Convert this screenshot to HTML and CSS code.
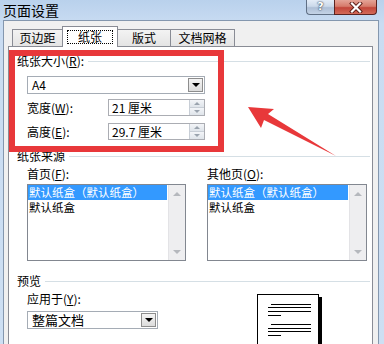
FILE: index.html
```html
<!DOCTYPE html>
<html lang="zh-CN">
<head>
    <meta charset="UTF-8">
    <meta name="viewport" content="width=device-width, initial-scale=1.0">
    <title>页面设置</title>
    <link rel="stylesheet" href="styles.css">
</head>
<body>
    <div class="dialog">
        <div class="title-bar">
            <span class="title">页面设置</span>
            <div class="title-buttons">
                <span class="btn-help">?</span>
                <span class="btn-close">
                    <svg width="14" height="11" viewBox="0 0 14 11">
                        <path d="M3 1.5 L11 9.5 M11 1.5 L3 9.5" stroke="#5a1c16" stroke-width="4" stroke-linecap="square"/>
                        <path d="M3 1.5 L11 9.5 M11 1.5 L3 9.5" stroke="#ffffff" stroke-width="2.2" stroke-linecap="square"/>
                    </svg>
                </span>
            </div>
        </div>

        <div class="client">
            <div class="tabs">
                <div class="tab tab-1">页边距</div>
                <div class="tab tab-2 active"><span class="focus">纸张</span></div>
                <div class="tab tab-3">版式</div>
                <div class="tab tab-4">文档网格</div>
            </div>

            <div class="panel">
                <!-- 纸张大小 -->
                <div class="group-title first"><span>纸张大小(<u>R</u>):</span></div>
                <div class="section">
                    <div class="combo size-combo">
                        <span class="combo-text">A4</span>
                        <span class="drop"></span>
                    </div>
                    <div class="field-row">
                        <span class="field-label">宽度(<u>W</u>):</span>
                        <div class="spin">
                            <span class="spin-text">21 厘米</span>
                            <span class="spin-btns"><i class="up"></i><i class="down"></i></span>
                        </div>
                    </div>
                    <div class="field-row second">
                        <span class="field-label">高度(<u>E</u>):</span>
                        <div class="spin">
                            <span class="spin-text">29.7 厘米</span>
                            <span class="spin-btns"><i class="up"></i><i class="down"></i></span>
                        </div>
                    </div>
                </div>

                <!-- 纸张来源 -->
                <div class="group-title source"><span>纸张来源</span></div>
                <div class="section source-cols">
                    <div class="col">
                        <div class="list-label">首页(<u>F</u>):</div>
                        <div class="listbox left-list">
                            <div class="items">
                                <div class="item selected">默认纸盒（默认纸盒）</div>
                                <div class="item">默认纸盒</div>
                            </div>
                            <div class="scrollbar"><i class="sc-up"></i><i class="sc-down"></i></div>
                        </div>
                    </div>
                    <div class="col">
                        <div class="list-label">其他页(<u>O</u>):</div>
                        <div class="listbox right-list">
                            <div class="items">
                                <div class="item selected">默认纸盒（默认纸盒）</div>
                                <div class="item">默认纸盒</div>
                            </div>
                            <div class="scrollbar"><i class="sc-up"></i><i class="sc-down"></i></div>
                        </div>
                    </div>
                </div>

                <!-- 预览 -->
                <div class="group-title preview"><span>预览</span></div>
                <div class="section preview-row">
                    <div class="apply-col">
                        <div class="list-label">应用于(<u>Y</u>):</div>
                        <div class="combo apply-combo">
                            <span class="combo-text">整篇文档</span>
                            <span class="drop"></span>
                        </div>
                    </div>
                    <div class="page">
                        <svg width="61" height="50" viewBox="0 0 61 50">
                            <g stroke="#000" stroke-width="1">
                                <line x1="13" y1="9.5" x2="53" y2="9.5"/>
                                <line x1="10" y1="12.5" x2="53" y2="12.5"/>
                                <line x1="10" y1="16.5" x2="53" y2="16.5"/>
                                <line x1="10" y1="20.5" x2="23" y2="20.5"/>
                                <line x1="13" y1="29.5" x2="53" y2="29.5"/>
                                <line x1="10" y1="33.5" x2="53" y2="33.5"/>
                                <line x1="10" y1="36.5" x2="53" y2="36.5"/>
                                <line x1="10" y1="40.5" x2="23" y2="40.5"/>
                            </g>
                        </svg>
                    </div>
                </div>
            </div>
        </div>

        <!-- annotation -->
        <div class="mark-box"></div>
        <svg class="mark-arrow" width="384" height="344" viewBox="0 0 384 344">
            <polygon points="248,107 274,109 268,114 336,156 264,120 261,128" fill="#e8383a"/>
        </svg>
    </div>
</body>
</html>
```

FILE: styles.css
```css
body {
    margin: 0;
    width: 384px;
    height: 344px;
    overflow: hidden;
    font-family: "Noto Sans CJK SC", sans-serif;
    font-size: 12px;
    color: #000;
    background: linear-gradient(180deg, #b9d1ec 0px, #c9dcf2 24px, #cddff3 100%);
}

u {
    text-decoration: underline;
}

.dialog {
    position: relative;
    height: 344px;
    display: flex;
    flex-direction: column;
}

.title-bar {
    height: 24px;
    display: flex;
    justify-content: space-between;
    align-items: flex-start;
}

.title {
    padding: 2px 0 0 3px;
    font-size: 14px;
    line-height: 16px;
}

.title-buttons {
    display: flex;
    margin-right: 7px;
}

.btn-help {
    width: 28px;
    height: 15px;
    box-sizing: border-box;
    border: 1px solid #5f6f84;
    border-top: none;
    border-right: none;
    border-radius: 0 0 0 4px;
    background: linear-gradient(180deg, #e3ecf7 0%, #cbd9ea 45%, #aebfd6 55%, #c4d3e6 100%);
    color: #fff;
    font-family: "DejaVu Sans", sans-serif;
    font-weight: bold;
    font-size: 11px;
    line-height: 14px;
    text-align: center;
    text-shadow: 0 0 2px #2c3a4d, 0 0 1px #2c3a4d;
}

.btn-close {
    width: 43px;
    height: 15px;
    box-sizing: border-box;
    border: 1px solid #5a2320;
    border-top: none;
    border-radius: 0 0 4px 0;
    background: linear-gradient(180deg, #e4a497 0%, #d67b6b 45%, #c2463a 55%, #d36a58 100%);
    display: flex;
    align-items: center;
    justify-content: center;
}

.client {
    flex: 1;
    margin: 0 5px 0 3px;
    border: 1px solid #8497ae;
    border-bottom: none;
    background: #f0f0f0;
    padding: 5px 5px 0 4px;
    display: flex;
    flex-direction: column;
}

.tabs {
    display: flex;
    align-items: flex-end;
    height: 21px;
    padding-left: 4px;
    margin-bottom: -1px;
    position: relative;
    z-index: 1;
}

.tab {
    box-sizing: border-box;
    height: 17px;
    margin-bottom: 1px;
    border: 1px solid #898c95;
    border-bottom: none;
    border-right: none;
    background: linear-gradient(180deg, #f3f3f3, #e4e4e4);
    line-height: 15px;
    text-align: center;
}

.tab-1 { width: 50px; }
.tab-2 { width: 56px; }
.tab-3 { width: 52px; }
.tab-4 { width: 65px; border-right: 1px solid #898c95; }

.tab.active {
    height: 21px;
    margin-bottom: 0;
    background: #fff;
    border-right: 1px solid #898c95;
    display: flex;
    align-items: center;
    justify-content: center;
}

.tab-2 + .tab {
    border-left: none;
}

.focus {
    display: block;
    width: 46px;
    height: 14px;
    box-sizing: border-box;
    border: 1px dotted #000;
    line-height: 12px;
}

.panel {
    flex: 1;
    background: #fff;
    border: 1px solid #898c95;
    border-bottom: none;
}

.group-title {
    display: flex;
    align-items: center;
    height: 14px;
    line-height: 14px;
    padding-left: 8px;
    margin-right: 2px;
}

.group-title::after {
    content: "";
    flex: 1;
    height: 0;
    border-top: 1px solid #d5dfe5;
    margin-left: 4px;
}

.group-title.first { margin-top: 7px; }
.group-title.source { margin-top: 9px; }
.group-title.preview { margin-top: 13px; }

.section {
    padding-left: 18px;
}

.combo {
    box-sizing: border-box;
    height: 18px;
    border: 1px solid #a5acb5;
    background: #fff;
    display: flex;
    align-items: center;
    justify-content: space-between;
    padding: 0 1px 0 4px;
}

.size-combo {
    width: 178px;
    margin-top: 8px;
}

.apply-combo {
    width: 131px;
    margin-top: 5px;
    font-size: 13px;
}

.combo-text {
    line-height: 14px;
}

.drop {
    box-sizing: border-box;
    width: 15px;
    height: 14px;
    border: 1px solid #8d8d8d;
    background: linear-gradient(180deg, #f4f4f4, #dcdcdc);
    display: flex;
    align-items: center;
    justify-content: center;
}

.drop::after {
    content: "";
    border-left: 4px solid transparent;
    border-right: 4px solid transparent;
    border-top: 4px solid #000;
}

.field-row {
    display: flex;
    align-items: center;
    margin-top: 5px;
}

.field-row.second {
    margin-top: 7px;
}

.field-label {
    width: 81px;
}

.spin {
    box-sizing: border-box;
    width: 97px;
    height: 17px;
    border: 1px solid #abadb3;
    background: #fff;
    display: flex;
    justify-content: space-between;
}

.spin-text {
    padding-left: 3px;
    line-height: 15px;
}

.spin-btns {
    width: 14px;
    display: flex;
    flex-direction: column;
    border-left: 1px solid #c8ced6;
}

.spin-btns i {
    flex: 1;
    display: flex;
    align-items: center;
    justify-content: center;
    background: linear-gradient(180deg, #f3f5f8, #dfe4ea);
}

.spin-btns .up {
    border-bottom: 1px solid #c8ced6;
}

.spin-btns .up::after {
    content: "";
    border-left: 3px solid transparent;
    border-right: 3px solid transparent;
    border-bottom: 3px solid #9aa3ae;
}

.spin-btns .down::after {
    content: "";
    border-left: 3px solid transparent;
    border-right: 3px solid transparent;
    border-top: 3px solid #9aa3ae;
}

.source-cols {
    display: grid;
    grid-template-columns: 180px 160px;
    margin-top: 4px;
}

.list-label {
    height: 14px;
    line-height: 14px;
}

.listbox {
    box-sizing: border-box;
    height: 77px;
    margin-top: 3px;
    border: 1px solid #828790;
    background: #fff;
    display: flex;
}

.left-list { width: 159px; }
.right-list { width: 160px; }

.items {
    flex: 1;
}

.item {
    height: 15px;
    line-height: 15px;
    font-size: 11.5px;
    padding-left: 1px;
    margin-right: 1px;
    white-space: nowrap;
}

.item.selected {
    background: #3399ff;
    color: #fff;
}

.scrollbar {
    width: 17px;
    background: #eeeef0;
    border-left: 1px solid #e3e3e6;
    display: flex;
    flex-direction: column;
    justify-content: space-between;
    align-items: center;
    padding: 7px 0 6px;
    box-sizing: border-box;
}

.sc-up {
    border-left: 4px solid transparent;
    border-right: 4px solid transparent;
    border-bottom: 4px solid #b5b8bd;
}

.sc-down {
    border-left: 4px solid transparent;
    border-right: 4px solid transparent;
    border-top: 4px solid #b5b8bd;
}

.preview-row {
    display: flex;
}

.apply-col {
    width: 230px;
    padding-top: 4px;
}

.page {
    box-sizing: border-box;
    width: 62px;
    height: 50px;
    margin-top: 6px;
    border: 1px solid #000;
    border-bottom: none;
    background: #fff;
    box-shadow: 3px 3px 0 #000;
}

.page svg {
    display: block;
}

.mark-box {
    position: absolute;
    left: 9px;
    top: 50px;
    width: 215px;
    height: 102px;
    box-sizing: border-box;
    border: 6px solid #e8383a;
}

.mark-arrow {
    position: absolute;
    left: 0;
    top: 0;
    pointer-events: none;
}
```
